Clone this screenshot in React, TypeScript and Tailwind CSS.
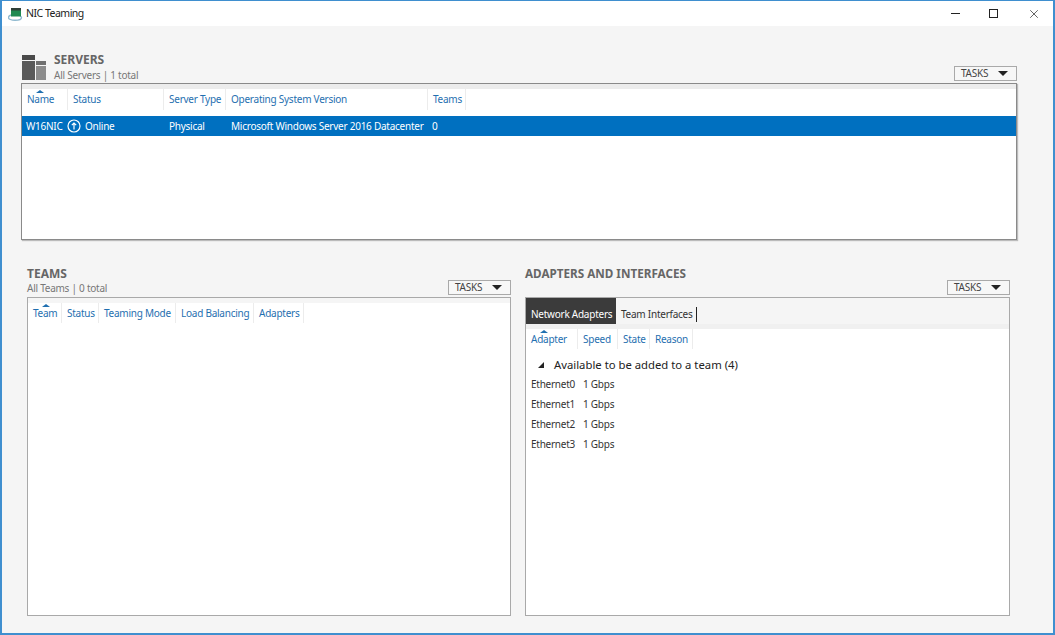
import { X } from 'lucide-react';

interface Col {
  label: string;
  width: number;
  sorted?: boolean;
}

const serverCols: Col[] = [
  { label: 'Name', width: 46, sorted: true },
  { label: 'Status', width: 96 },
  { label: 'Server Type', width: 62 },
  { label: 'Operating System Version', width: 202 },
  { label: 'Teams', width: 38 },
];

const teamCols: Col[] = [
  { label: 'Team', width: 34, sorted: true },
  { label: 'Status', width: 37 },
  { label: 'Teaming Mode', width: 77 },
  { label: 'Load Balancing', width: 78 },
  { label: 'Adapters', width: 50 },
];

const adapterCols: Col[] = [
  { label: 'Adapter', width: 52, sorted: true },
  { label: 'Speed', width: 40 },
  { label: 'State', width: 32 },
  { label: 'Reason', width: 43 },
];

const adapters = ['Ethernet0', 'Ethernet1', 'Ethernet2', 'Ethernet3'];

function ColumnHeaders({ cols, height }: { cols: Col[]; height: string }) {
  return (
    <div className={`flex ${height}`}>
      {cols.map((c) => (
        <div
          key={c.label}
          style={{ width: c.width }}
          className="relative flex items-center shrink-0 pl-[5px] border-r border-[#ececec] text-[10px] tracking-[-0.25px] text-[#1f6fb0] whitespace-nowrap"
        >
          {c.sorted && (
            <span className="absolute left-[14px] top-[1px] w-0 h-0 border-x-[4px] border-x-transparent border-b-[3px] border-b-[#1f6fb0]" />
          )}
          {c.label}
        </div>
      ))}
    </div>
  );
}

function TasksButton() {
  return (
    <div className="flex items-center justify-between w-[63px] h-[15px] pl-[6px] pr-[8px] border border-[#a9a9a9] bg-[#f7f7f7] text-[10px] tracking-[-0.25px] text-[#444]">
      <span>TASKS</span>
      <span className="w-0 h-0 border-x-[5px] border-x-transparent border-t-[5px] border-t-[#222]" />
    </div>
  );
}

function ServersIcon() {
  return (
    <svg width="24" height="25" viewBox="0 0 24 25" className="shrink-0">
      <rect x="0" y="0" width="13" height="5" fill="#4a4a4a" />
      <rect x="0" y="6" width="13" height="19" fill="#5a5a5a" />
      <rect x="14" y="6" width="10" height="4" fill="#707070" />
      <rect x="14" y="11" width="10" height="14" fill="#8c8c8c" />
    </svg>
  );
}

function AppIcon() {
  return (
    <svg width="15" height="15" viewBox="0 0 15 15" className="shrink-0">
      <ellipse cx="7" cy="11.5" rx="6.5" ry="2.8" fill="none" stroke="#8fb9cf" strokeWidth="1.4" />
      <rect x="3" y="4" width="10" height="6.5" fill="#1f8a52" />
      <rect x="3" y="2" width="10" height="2.5" fill="#2f3f38" />
    </svg>
  );
}

function OnlineIcon() {
  return (
    <svg width="14" height="14" viewBox="0 0 14 14" className="shrink-0">
      <circle cx="7" cy="7" r="6" fill="none" stroke="#fff" strokeWidth="1.2" />
      <path d="M7 10.5V4M4.8 6.2 7 4l2.2 2.2" fill="none" stroke="#fff" strokeWidth="1.2" />
    </svg>
  );
}

export default function App() {
  return (
    <div
      className="w-[1055px] h-[635px] flex flex-col overflow-hidden bg-[#f5f5f5] border-x-2 border-t border-b-2 border-[#3f8fcf] text-[#333]"
      style={{ fontFamily: '"Noto Sans", "Open Sans", sans-serif' }}
    >
      {/* title bar */}
      <div className="flex items-center h-[25px] shrink-0 bg-white pl-[6px]">
        <AppIcon />
        <span className="ml-[3px] text-[10.5px] tracking-[-0.5px] text-[#222]">NIC Teaming</span>
        <div className="ml-auto flex items-center pr-[12px] text-[#222]">
          <span className="w-[9px] h-px bg-[#222]" />
          <span className="ml-[29px] w-[9px] h-[9px] border border-[#222]" />
          <X className="ml-[29px]" size={14} strokeWidth={1.2} />
        </div>
      </div>

      {/* servers */}
      <div className="flex flex-col pl-[19px] pt-[28px] pr-[36px] shrink-0">
        <div className="flex items-end h-[29px] pb-[3px] pl-[1px]">
          <ServersIcon />
          <div className="ml-[8px] flex flex-col leading-none">
            <span className="text-[12px] font-bold text-[#666]">SERVERS</span>
            <span className="mt-[4px] text-[10px] tracking-[-0.25px] text-[#777]">All Servers | 1 total</span>
          </div>
          <div className="ml-auto -mb-[1px]">
            <TasksButton />
          </div>
        </div>
        <div className="h-[157px] bg-white border border-[#8a8a8a] shadow-[1px_1px_1px_#bbb]">
          <div className="h-[5px] bg-[#ececec]" />
          <ColumnHeaders cols={serverCols} height="h-[27px] pb-[6px]" />
          <div className="flex items-center h-[20px] bg-[#0070c0] text-white text-[10px] tracking-[-0.25px] whitespace-nowrap">
            <span className="w-[45px] shrink-0 pl-[4px]">W16NIC</span>
            <span className="w-[97px] shrink-0 flex items-center gap-[4px]">
              <OnlineIcon />
              Online
            </span>
            <span className="w-[62px] shrink-0 pl-[5px]">Physical</span>
            <span className="w-[202px] shrink-0 pl-[5px]">Microsoft Windows Server 2016 Datacenter</span>
            <span className="pl-[4px]">0</span>
          </div>
        </div>
      </div>

      {/* teams and adapters */}
      <div className="flex mt-[27px] pl-[25px] gap-[14px] shrink-0">
        <div className="w-[484px] flex flex-col">
          <div className="flex items-start justify-between h-[30px]">
            <div className="flex flex-col leading-none pt-px">
              <span className="text-[12px] font-bold text-[#666]">TEAMS</span>
              <span className="mt-[3px] text-[10px] tracking-[-0.25px] text-[#777]">All Teams | 0 total</span>
            </div>
            <div className="mt-[13px]">
              <TasksButton />
            </div>
          </div>
          <div className="h-[319px] bg-white border border-[#a9a9a9]">
            <div className="h-[5px] bg-[#f5f5f5]" />
            <ColumnHeaders cols={teamCols} height="h-[20px]" />
          </div>
        </div>

        <div className="w-[485px] flex flex-col">
          <div className="flex items-start justify-between h-[30px]">
            <span className="pt-px text-[11.7px] font-bold leading-none text-[#666]">ADAPTERS AND INTERFACES</span>
            <div className="mt-[13px]">
              <TasksButton />
            </div>
          </div>
          <div className="h-[319px] bg-white border border-[#a9a9a9]">
            <div className="flex items-center h-[26px] bg-[#f5f5f5] text-[10px] tracking-[-0.25px] whitespace-nowrap">
              <div className="flex items-end h-full w-[90px] pl-[5px] pb-[2px] bg-[#3b3b3b] text-white">Network Adapters</div>
              <div className="flex items-end h-full pl-[5px] pb-[2px] text-[#333]">
                <span className="pr-[3px] border-r border-[#222]">Team Interfaces</span>
              </div>
            </div>
            <div className="h-[5px] bg-[#f0f0f0]" />
            <ColumnHeaders cols={adapterCols} height="h-[20px]" />
            <div className="flex items-center h-[18px] mt-[7px] pl-[12px] text-[11.3px] text-[#222]">
              <span className="w-0 h-0 border-l-[6px] border-l-transparent border-b-[6px] border-b-[#222]" />
              <span className="ml-[10px]">Available to be added to a team (4)</span>
            </div>
            {adapters.map((a) => (
              <div key={a} className="flex items-center h-[20px] pl-[5px] text-[10px] tracking-[-0.25px] text-[#333]">
                <span className="w-[52px]">{a}</span>
                <span>1 Gbps</span>
              </div>
            ))}
          </div>
        </div>
      </div>
    </div>
  );
}
